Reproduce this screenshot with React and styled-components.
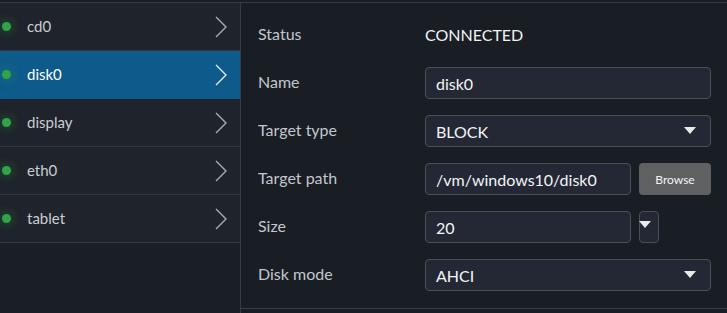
import React from 'react';
import styled, { createGlobalStyle } from 'styled-components';

const GlobalStyle = createGlobalStyle`
  html, body {
    margin: 0;
    padding: 0;
    background: #191d24;
  }
  body {
    font-family: Lato, "Open Sans", sans-serif;
    padding-top: 2px;
  }
`;

const devices = [
  { name: 'cd0' },
  { name: 'disk0', selected: true },
  { name: 'display' },
  { name: 'eth0' },
  { name: 'tablet' },
];

const Chevron = () => (
  <svg width="14" height="22" viewBox="0 0 14 22">
    <path d="M2 1 L12 11 L2 21" fill="none" stroke="currentColor" strokeWidth="1.4" />
  </svg>
);

const Caret = () => (
  <svg width="12" height="8" viewBox="0 0 12 8">
    <path d="M0 0 L12 0 L6 7 Z" fill="#e8eaec" />
  </svg>
);

function App() {
  return (
    <>
      <GlobalStyle />
      <Layout>
        <Sidebar>
          {devices.map((d) => (
            <Row key={d.name} selected={d.selected}>
              <Dot />
              <RowName>{d.name}</RowName>
              <Arrow selected={d.selected}>
                <Chevron />
              </Arrow>
            </Row>
          ))}
        </Sidebar>
        <Panel>
          <Form>
            <Field>
              <Label>Status</Label>
              <Value>CONNECTED</Value>
            </Field>
            <Field>
              <Label>Name</Label>
              <Input defaultValue="disk0" />
            </Field>
            <Field>
              <Label>Target type</Label>
              <Select>
                <span>BLOCK</span>
                <Caret />
              </Select>
            </Field>
            <Field>
              <Label>Target path</Label>
              <Inline>
                <Input narrow defaultValue="/vm/windows10/disk0" />
                <Button>Browse</Button>
              </Inline>
            </Field>
            <Field>
              <Label>Size</Label>
              <Inline>
                <Input narrow defaultValue="20" />
                <UnitSelect>
                  <Caret />
                </UnitSelect>
              </Inline>
            </Field>
            <Field>
              <Label>Disk mode</Label>
              <Select>
                <span>AHCI</span>
                <Caret />
              </Select>
            </Field>
          </Form>
        </Panel>
      </Layout>
    </>
  );
}

const Layout = styled.div`
  display: flex;
  border-top: 1px solid #353a43;
  height: 310px;
`;

const Sidebar = styled.div`
  width: 240px;
  flex-shrink: 0;
  border-right: 1px solid #353a43;
  background: #1a1e25;
`;

const Row = styled.div`
  display: flex;
  align-items: center;
  height: 48px;
  box-sizing: border-box;
  border-bottom: 1px solid ${(p) => (p.selected ? '#0e5a8b' : '#33383f')};
  background: ${(p) => (p.selected ? '#0e5a8b' : '#1f232b')};
  color: ${(p) => (p.selected ? '#ffffff' : '#c9cdd3')};
  padding: 0 12px 0 2px;
`;

const Dot = styled.span`
  width: 9px;
  height: 9px;
  border-radius: 50%;
  background: #2fa548;
  box-shadow: 0 0 9px 4px rgba(47, 165, 72, 0.2);
`;

const RowName = styled.span`
  flex: 1;
  margin-left: 16px;
  font-size: 15px;
  margin-top: -1px;
`;

const Arrow = styled.span`
  display: flex;
  color: ${(p) => (p.selected ? '#e6edf3' : '#a9aeb5')};
`;

const Panel = styled.div`
  flex: 1;
  display: flex;
  flex-direction: column;
`;

const Form = styled.div`
  padding: 8px 16px 9px 17px;
  border-bottom: 1px solid #3a3f47;
`;

const Field = styled.div`
  display: flex;
  align-items: center;
  height: 48px;
`;

const Label = styled.div`
  width: 167px;
  flex-shrink: 0;
  font-size: 16px;
  color: #c3c7cc;
  margin-top: -4px;
`;

const Value = styled.div`
  font-size: 16px;
  color: #f2f3f5;
  margin-top: -1px;
`;

const Input = styled.input`
  box-sizing: border-box;
  width: ${(p) => (p.narrow ? '206px' : '286px')};
  height: 32px;
  padding: 0 10px;
  background: #232834;
  border: 1px solid #4a4f58;
  border-radius: 4px;
  color: #f4f5f7;
  font-family: Lato, "Open Sans", sans-serif;
  font-size: 16px;
  outline: none;
`;

const Select = styled.div`
  box-sizing: border-box;
  width: 286px;
  height: 32px;
  padding: 0 14px 0 10px;
  display: flex;
  align-items: center;
  justify-content: space-between;
  background: #232834;
  border: 1px solid #4a4f58;
  border-radius: 4px;
  color: #f4f5f7;
  font-size: 16px;
`;

const Inline = styled.div`
  display: flex;
  gap: 8px;
`;

const Button = styled.button`
  width: 72px;
  height: 32px;
  border: none;
  border-radius: 4px;
  background: #5f6062;
  color: #f4f5f7;
  font-family: Lato, "Open Sans", sans-serif;
  font-size: 12px;
`;

const UnitSelect = styled.div`
  box-sizing: border-box;
  width: 20px;
  height: 32px;
  display: flex;
  align-items: center;
  justify-content: center;
  background: #232834;
  border: 1px solid #4a4f58;
  border-radius: 4px;
  svg {
    margin-left: -8px;
    margin-top: -4px;
  }
`;

export default App;
